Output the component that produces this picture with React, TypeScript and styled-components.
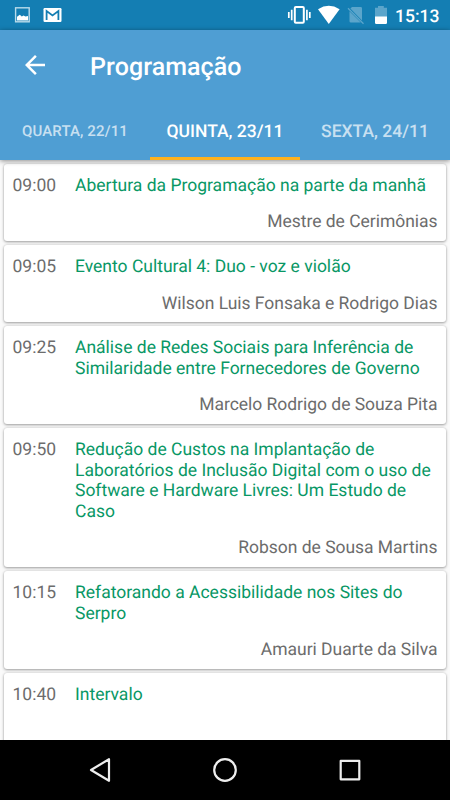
import React from 'react';
import styled, { createGlobalStyle } from 'styled-components';

const GlobalStyle = createGlobalStyle`
  * { box-sizing: border-box; }
  body {
    margin: 0;
    background: #fafafa;
    font-family: Roboto, sans-serif;
    text-rendering: geometricPrecision;
  }
`;

const Screen = styled.div`
  width: 450px;
  height: 800px;
  display: flex;
  flex-direction: column;
  overflow: hidden;
  background: #fafafa;
`;

const StatusBar = styled.div`
  height: 30px;
  flex: none;
  display: flex;
  align-items: center;
  justify-content: space-between;
  background: #147eb3;
  color: #fff;
`;

const StatusIcons = styled.svg`
  display: block;
  flex: none;
`;

const StatusRight = styled.div`
  display: flex;
  align-items: center;
  padding-right: 10px;
`;

const Clock = styled.span`
  width: 45px;
  font-size: 17.5px;
  font-weight: 500;
  line-height: 30px;
  padding-top: 3px;
  white-space: nowrap;
`;

const AppBar = styled.header`
  height: 130px;
  flex: none;
  background: #4f9ed3;
  color: #fff;
  z-index: 1;
  box-shadow: 0 1px 5px rgba(0, 0, 0, 0.45);
`;

const Toolbar = styled.div`
  height: 70px;
  display: flex;
  align-items: center;
  padding: 0 0 0 20px;
`;

const BackButton = styled.button`
  width: 30px;
  height: 30px;
  margin-right: 40px;
  padding: 0;
  border: 0;
  background: none;
  color: inherit;
`;

const Title = styled.h1`
  margin: 0;
  padding-top: 6px;
  font-size: 25px;
  font-weight: 500;
  line-height: 30px;
  letter-spacing: 0.08px;
`;

const Tabs = styled.nav`
  display: grid;
  grid-template-columns: repeat(3, 1fr);
  height: 60px;
`;

const Tab = styled.div<{ $active?: boolean; $small?: boolean }>`
  display: flex;
  align-items: center;
  justify-content: center;
  padding-top: ${(p) => (p.$active ? 6 : p.$small ? 2 : 3)}px;
  border-bottom: ${(p) => (p.$active ? '3px solid #ffb21d' : '0')};
  color: ${(p) => (p.$active ? '#fff' : 'rgba(255, 255, 255, 0.7)')};
  font-size: ${(p) => (p.$small ? 15 : 17.5)}px;
  letter-spacing: ${(p) => (p.$small ? 0.12 : 0)}px;
  font-weight: 500;
  white-space: nowrap;
`;

const List = styled.main`
  flex: 1;
  min-height: 0;
  overflow: hidden;
  display: flex;
  flex-direction: column;
  gap: 4px;
  padding: 4px 4px 0;
`;

const Card = styled.article`
  flex: none;
  display: grid;
  grid-template-columns: 62.5px 1fr;
  row-gap: 15.8px;
  padding: 12px 8.5px 8.2px;
  border-radius: 3px;
  background: #fff;
  box-shadow: 0 1px 3px rgba(0, 0, 0, 0.36), 0 0 2px rgba(0, 0, 0, 0.12);
  font-size: 17.5px;
  line-height: 20.6px;
  color: #6c6c6c;
`;

const Time = styled.time``;

const Talk = styled.div`
  color: #089765;
  white-space: pre-line;
`;

const Speaker = styled.div`
  grid-column: 1 / -1;
  min-height: 20.6px;
  letter-spacing: -0.03px;
  text-align: right;
`;

const NavBar = styled.footer`
  height: 60px;
  flex: none;
  display: flex;
  align-items: center;
  justify-content: center;
  gap: 95px;
  background: #000;
  z-index: 1;
`;

const NavIcon = styled.svg`
  width: 30px;
  height: 30px;
  fill: none;
  stroke: #eee;
  stroke-width: 2.2;
  stroke-linejoin: round;
`;

const sessions = [
  { time: '09:00', talk: 'Abertura da Programação na parte da manhã', speaker: 'Mestre de Cerimônias' },
  { time: '09:05', talk: 'Evento Cultural 4: Duo - voz e violão', speaker: 'Wilson Luis Fonsaka e Rodrigo Dias' },
  {
    time: '09:25',
    talk: 'Análise de Redes Sociais para Inferência de\nSimilaridade entre Fornecedores de Governo',
    speaker: 'Marcelo Rodrigo de Souza Pita',
  },
  {
    time: '09:50',
    talk: 'Redução de Custos na Implantação de\nLaboratórios de Inclusão Digital com o uso de\nSoftware e Hardware Livres: Um Estudo de\nCaso',
    speaker: 'Robson de Sousa Martins',
  },
  { time: '10:15', talk: 'Refatorando a Acessibilidade nos Sites do\nSerpro', speaker: 'Amauri Duarte da Silva' },
  { time: '10:40', talk: 'Intervalo', speaker: '' },
];

export default function App() {
  return (
    <>
      <GlobalStyle />
      <Screen>
        <StatusBar>
          <StatusIcons width="80" height="30" viewBox="0 0 80 30">
            <rect x="15.6" y="7.8" width="13.6" height="14" fill="none" stroke="#b9dbea" strokeWidth="1.4" />
            <path d="M17 20.4v-3.6l2.8-2 2 1.6 1.7-1 2 1.2 2.5-.6v4.4z" fill="#fff" />
            <rect x="43.5" y="8" width="18" height="14" rx="1.2" fill="#fff" />
            <path d="M46.6 20V11l5.9 4.4 5.9-4.4v9" fill="none" stroke="#147eb3" strokeWidth="1.8" />
          </StatusIcons>
          <StatusRight>
            <StatusIcons width="109" height="30" viewBox="286 0 109 30">
              <rect x="294.8" y="7" width="9" height="15.8" rx="1" fill="none" stroke="#fff" strokeWidth="2" />
              <path d="M291.7 9.8v10.4M288.8 12v6M306.9 9.8v10.4M309.8 12v6" stroke="#fff" strokeWidth="1.7" />
              <path d="M318 9.3Q328.8 2.4 339.6 9.3L328.8 24z" fill="#fff" />
              <path d="M352 7h8.7q1.3 0 1.3 1.3v12.2L350.4 8.6zM349.5 11.3L360.8 22.6H350.8q-1.3 0-1.3-1.3z" fill="#5ba5cb" />
              <path d="M348 8.3L363.5 23.8" stroke="#5ba5cb" strokeWidth="1.3" />
              <path d="M378 6h5.8v1.7h3.2V17h-12V7.7h3z" fill="#5ba5cb" />
              <path d="M375 16.5h12V22.4q0 1.6-1.2 1.6h-9.6q-1.2 0-1.2-1.6z" fill="#fff" />
            </StatusIcons>
            <Clock>15:13</Clock>
          </StatusRight>
        </StatusBar>
        <AppBar>
          <Toolbar>
            <BackButton aria-label="Voltar">
              <svg width="30" height="30" viewBox="0 0 24 24" fill="currentColor" display="block">
                <path d="M20 11H7.83l5.59-5.59L12 4l-8 8 8 8 1.41-1.41L7.83 13H20v-2z" />
              </svg>
            </BackButton>
            <Title>Programação</Title>
          </Toolbar>
          <Tabs>
            <Tab $small>QUARTA, 22/11</Tab>
            <Tab $active>QUINTA, 23/11</Tab>
            <Tab>SEXTA, 24/11</Tab>
          </Tabs>
        </AppBar>
        <List>
          {sessions.map((s) => (
            <Card key={s.time}>
              <Time>{s.time}</Time>
              <Talk>{s.talk}</Talk>
              <Speaker>{s.speaker}</Speaker>
            </Card>
          ))}
        </List>
        <NavBar>
          <NavIcon viewBox="0 0 30 30"><path d="M24 4.2V25.8L6 15z" /></NavIcon>
          <NavIcon viewBox="0 0 30 30"><circle cx="15" cy="15" r="10.8" /></NavIcon>
          <NavIcon viewBox="0 0 30 30"><rect x="5.7" y="5.9" width="18.6" height="18.4" /></NavIcon>
        </NavBar>
      </Screen>
    </>
  );
}
